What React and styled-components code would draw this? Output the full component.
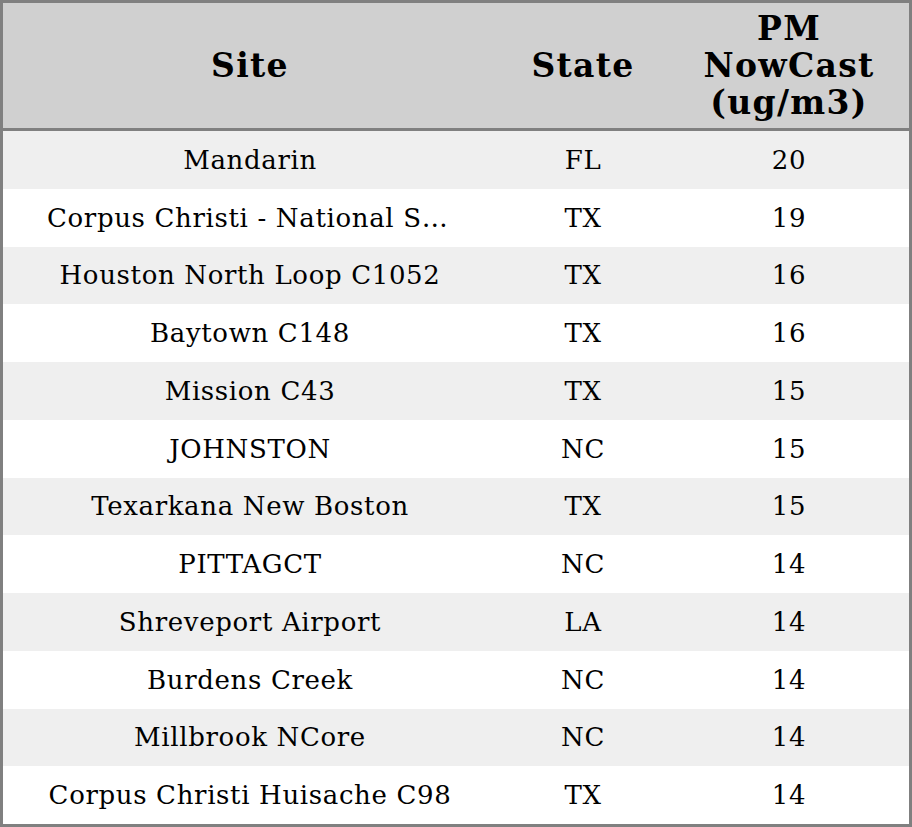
import React from 'react';
import styled, { createGlobalStyle } from 'styled-components';

const GlobalStyle = createGlobalStyle`
  html, body {
    margin: 0;
    padding: 0;
    background: #ffffff;
  }
  * {
    box-sizing: border-box;
  }
`;

const COLS = '494px 172px 1fr';

const Board = styled.div`
  width: 912px;
  height: 827px;
  display: flex;
  flex-direction: column;
  border: 3px solid #808080;
  font-family: 'DejaVu Serif', 'Liberation Serif', serif;
  color: #000;
`;

const HeaderRow = styled.div`
  display: grid;
  grid-template-columns: ${COLS};
  height: 128px;
  flex: none;
  background: #d0d0d0;
  border-bottom: 3px solid #808080;
`;

const HeaderCell = styled.div`
  display: flex;
  align-items: center;
  justify-content: center;
  text-align: center;
  font-weight: bold;
  font-size: 33px;
  line-height: 37px;
  letter-spacing: 1.3px;
`;

const Body = styled.div`
  flex: 1;
  display: flex;
  flex-direction: column;
`;

const Row = styled.div`
  flex: 1;
  display: grid;
  grid-template-columns: ${COLS};
  align-items: center;
  background: ${(p) => (p.$striped ? '#efefef' : '#ffffff')};
  font-size: 26px;
  letter-spacing: 0.65px;
`;

const Cell = styled.div`
  text-align: center;
  padding: ${(p) => (p.$wide ? '0 44px' : '0')};
  white-space: nowrap;
  overflow: hidden;
  text-overflow: ellipsis;
`;

const rows = [
  ['Mandarin', 'FL', 20],
  ['Corpus Christi - National Seashore', 'TX', 19],
  ['Houston North Loop C1052', 'TX', 16],
  ['Baytown C148', 'TX', 16],
  ['Mission C43', 'TX', 15],
  ['JOHNSTON', 'NC', 15],
  ['Texarkana New Boston', 'TX', 15],
  ['PITTAGCT', 'NC', 14],
  ['Shreveport Airport', 'LA', 14],
  ['Burdens Creek', 'NC', 14],
  ['Millbrook NCore', 'NC', 14],
  ['Corpus Christi Huisache C98', 'TX', 14],
];

const App = () => {
  return (
    <>
      <GlobalStyle />
      <Board>
        <HeaderRow>
          <HeaderCell>Site</HeaderCell>
          <HeaderCell>State</HeaderCell>
          <HeaderCell>
            PM
            <br />
            NowCast
            <br />
            (ug/m3)
          </HeaderCell>
        </HeaderRow>
        <Body>
          {rows.map(([site, state, value], i) => (
            <Row key={site} $striped={i % 2 === 0}>
              <Cell $wide>{site}</Cell>
              <Cell>{state}</Cell>
              <Cell>{value}</Cell>
            </Row>
          ))}
        </Body>
      </Board>
    </>
  );
};

export default App;
